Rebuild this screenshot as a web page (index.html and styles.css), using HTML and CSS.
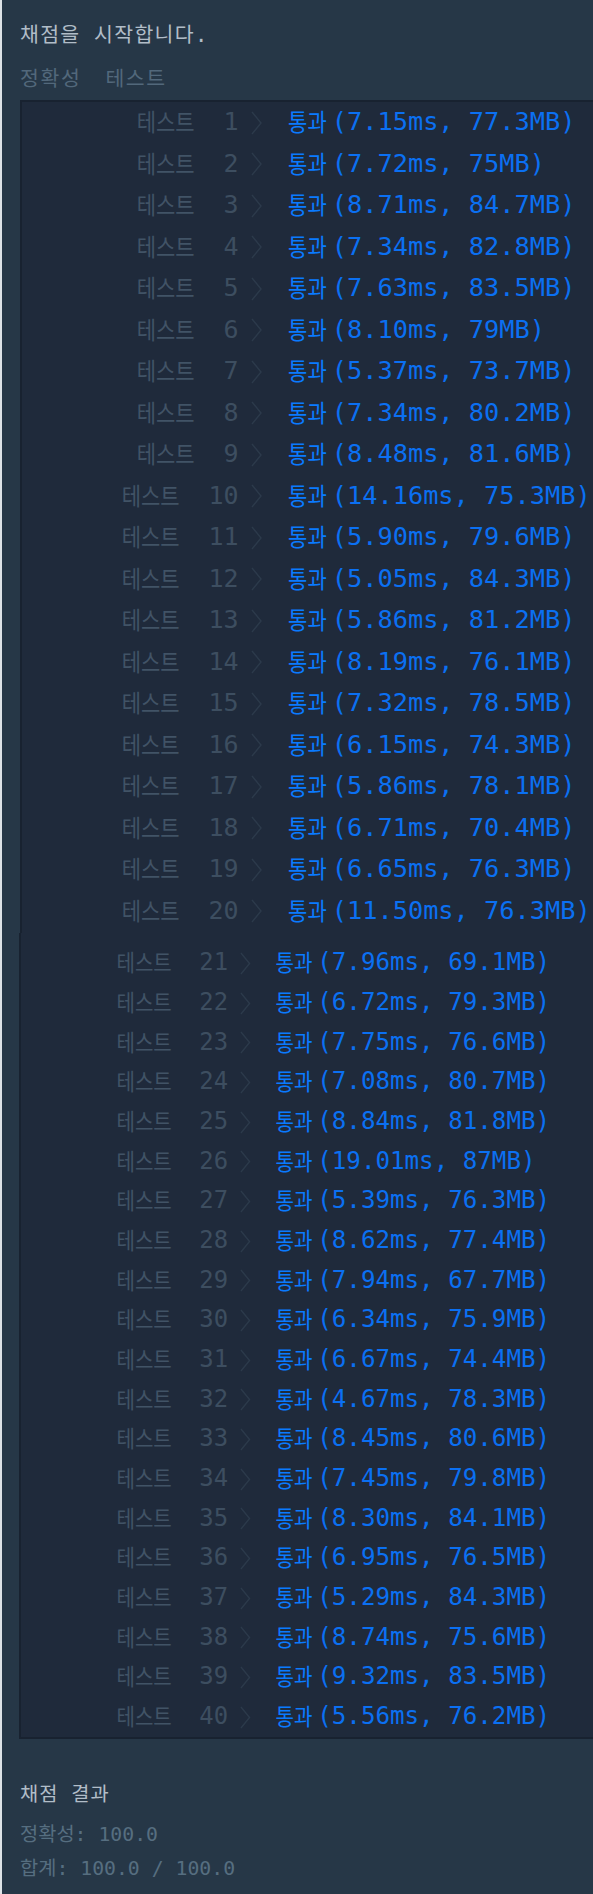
FILE: index.html
```html
<!DOCTYPE html>
<html lang="ko">
<head>
<meta charset="utf-8">
<title>채점 결과</title>
<link rel="stylesheet" href="styles.css">
</head>
<body>
<section class="shot shot-top">
  <p class="intro">채점을 시작합니다.</p>
  <div class="tabs"><span>정확성</span><span>테스트</span></div>
  <div class="console console-top">
    <div class="row"><span class="label"><span class="k">테스트</span><span class="n">1</span></span><svg class="chev" viewBox="0 0 11 24"><polyline points="1,1 10,12 1,23"/></svg><span class="res"><span class="pass">통과</span>(7.15ms, 77.3MB)</span></div>
    <div class="row"><span class="label"><span class="k">테스트</span><span class="n">2</span></span><svg class="chev" viewBox="0 0 11 24"><polyline points="1,1 10,12 1,23"/></svg><span class="res"><span class="pass">통과</span>(7.72ms, 75MB)</span></div>
    <div class="row"><span class="label"><span class="k">테스트</span><span class="n">3</span></span><svg class="chev" viewBox="0 0 11 24"><polyline points="1,1 10,12 1,23"/></svg><span class="res"><span class="pass">통과</span>(8.71ms, 84.7MB)</span></div>
    <div class="row"><span class="label"><span class="k">테스트</span><span class="n">4</span></span><svg class="chev" viewBox="0 0 11 24"><polyline points="1,1 10,12 1,23"/></svg><span class="res"><span class="pass">통과</span>(7.34ms, 82.8MB)</span></div>
    <div class="row"><span class="label"><span class="k">테스트</span><span class="n">5</span></span><svg class="chev" viewBox="0 0 11 24"><polyline points="1,1 10,12 1,23"/></svg><span class="res"><span class="pass">통과</span>(7.63ms, 83.5MB)</span></div>
    <div class="row"><span class="label"><span class="k">테스트</span><span class="n">6</span></span><svg class="chev" viewBox="0 0 11 24"><polyline points="1,1 10,12 1,23"/></svg><span class="res"><span class="pass">통과</span>(8.10ms, 79MB)</span></div>
    <div class="row"><span class="label"><span class="k">테스트</span><span class="n">7</span></span><svg class="chev" viewBox="0 0 11 24"><polyline points="1,1 10,12 1,23"/></svg><span class="res"><span class="pass">통과</span>(5.37ms, 73.7MB)</span></div>
    <div class="row"><span class="label"><span class="k">테스트</span><span class="n">8</span></span><svg class="chev" viewBox="0 0 11 24"><polyline points="1,1 10,12 1,23"/></svg><span class="res"><span class="pass">통과</span>(7.34ms, 80.2MB)</span></div>
    <div class="row"><span class="label"><span class="k">테스트</span><span class="n">9</span></span><svg class="chev" viewBox="0 0 11 24"><polyline points="1,1 10,12 1,23"/></svg><span class="res"><span class="pass">통과</span>(8.48ms, 81.6MB)</span></div>
    <div class="row"><span class="label"><span class="k">테스트</span><span class="n">10</span></span><svg class="chev" viewBox="0 0 11 24"><polyline points="1,1 10,12 1,23"/></svg><span class="res"><span class="pass">통과</span>(14.16ms, 75.3MB)</span></div>
    <div class="row"><span class="label"><span class="k">테스트</span><span class="n">11</span></span><svg class="chev" viewBox="0 0 11 24"><polyline points="1,1 10,12 1,23"/></svg><span class="res"><span class="pass">통과</span>(5.90ms, 79.6MB)</span></div>
    <div class="row"><span class="label"><span class="k">테스트</span><span class="n">12</span></span><svg class="chev" viewBox="0 0 11 24"><polyline points="1,1 10,12 1,23"/></svg><span class="res"><span class="pass">통과</span>(5.05ms, 84.3MB)</span></div>
    <div class="row"><span class="label"><span class="k">테스트</span><span class="n">13</span></span><svg class="chev" viewBox="0 0 11 24"><polyline points="1,1 10,12 1,23"/></svg><span class="res"><span class="pass">통과</span>(5.86ms, 81.2MB)</span></div>
    <div class="row"><span class="label"><span class="k">테스트</span><span class="n">14</span></span><svg class="chev" viewBox="0 0 11 24"><polyline points="1,1 10,12 1,23"/></svg><span class="res"><span class="pass">통과</span>(8.19ms, 76.1MB)</span></div>
    <div class="row"><span class="label"><span class="k">테스트</span><span class="n">15</span></span><svg class="chev" viewBox="0 0 11 24"><polyline points="1,1 10,12 1,23"/></svg><span class="res"><span class="pass">통과</span>(7.32ms, 78.5MB)</span></div>
    <div class="row"><span class="label"><span class="k">테스트</span><span class="n">16</span></span><svg class="chev" viewBox="0 0 11 24"><polyline points="1,1 10,12 1,23"/></svg><span class="res"><span class="pass">통과</span>(6.15ms, 74.3MB)</span></div>
    <div class="row"><span class="label"><span class="k">테스트</span><span class="n">17</span></span><svg class="chev" viewBox="0 0 11 24"><polyline points="1,1 10,12 1,23"/></svg><span class="res"><span class="pass">통과</span>(5.86ms, 78.1MB)</span></div>
    <div class="row"><span class="label"><span class="k">테스트</span><span class="n">18</span></span><svg class="chev" viewBox="0 0 11 24"><polyline points="1,1 10,12 1,23"/></svg><span class="res"><span class="pass">통과</span>(6.71ms, 70.4MB)</span></div>
    <div class="row"><span class="label"><span class="k">테스트</span><span class="n">19</span></span><svg class="chev" viewBox="0 0 11 24"><polyline points="1,1 10,12 1,23"/></svg><span class="res"><span class="pass">통과</span>(6.65ms, 76.3MB)</span></div>
    <div class="row"><span class="label"><span class="k">테스트</span><span class="n">20</span></span><svg class="chev" viewBox="0 0 11 24"><polyline points="1,1 10,12 1,23"/></svg><span class="res"><span class="pass">통과</span>(11.50ms, 76.3MB)</span></div>
  </div>
</section>
<section class="shot shot-bottom">
  <div class="console console-bottom">
    <div class="row"><span class="label"><span class="k">테스트</span><span class="n">21</span></span><svg class="chev" viewBox="0 0 11 24"><polyline points="1,1 10,12 1,23"/></svg><span class="res"><span class="pass">통과</span>(7.96ms, 69.1MB)</span></div>
    <div class="row"><span class="label"><span class="k">테스트</span><span class="n">22</span></span><svg class="chev" viewBox="0 0 11 24"><polyline points="1,1 10,12 1,23"/></svg><span class="res"><span class="pass">통과</span>(6.72ms, 79.3MB)</span></div>
    <div class="row"><span class="label"><span class="k">테스트</span><span class="n">23</span></span><svg class="chev" viewBox="0 0 11 24"><polyline points="1,1 10,12 1,23"/></svg><span class="res"><span class="pass">통과</span>(7.75ms, 76.6MB)</span></div>
    <div class="row"><span class="label"><span class="k">테스트</span><span class="n">24</span></span><svg class="chev" viewBox="0 0 11 24"><polyline points="1,1 10,12 1,23"/></svg><span class="res"><span class="pass">통과</span>(7.08ms, 80.7MB)</span></div>
    <div class="row"><span class="label"><span class="k">테스트</span><span class="n">25</span></span><svg class="chev" viewBox="0 0 11 24"><polyline points="1,1 10,12 1,23"/></svg><span class="res"><span class="pass">통과</span>(8.84ms, 81.8MB)</span></div>
    <div class="row"><span class="label"><span class="k">테스트</span><span class="n">26</span></span><svg class="chev" viewBox="0 0 11 24"><polyline points="1,1 10,12 1,23"/></svg><span class="res"><span class="pass">통과</span>(19.01ms, 87MB)</span></div>
    <div class="row"><span class="label"><span class="k">테스트</span><span class="n">27</span></span><svg class="chev" viewBox="0 0 11 24"><polyline points="1,1 10,12 1,23"/></svg><span class="res"><span class="pass">통과</span>(5.39ms, 76.3MB)</span></div>
    <div class="row"><span class="label"><span class="k">테스트</span><span class="n">28</span></span><svg class="chev" viewBox="0 0 11 24"><polyline points="1,1 10,12 1,23"/></svg><span class="res"><span class="pass">통과</span>(8.62ms, 77.4MB)</span></div>
    <div class="row"><span class="label"><span class="k">테스트</span><span class="n">29</span></span><svg class="chev" viewBox="0 0 11 24"><polyline points="1,1 10,12 1,23"/></svg><span class="res"><span class="pass">통과</span>(7.94ms, 67.7MB)</span></div>
    <div class="row"><span class="label"><span class="k">테스트</span><span class="n">30</span></span><svg class="chev" viewBox="0 0 11 24"><polyline points="1,1 10,12 1,23"/></svg><span class="res"><span class="pass">통과</span>(6.34ms, 75.9MB)</span></div>
    <div class="row"><span class="label"><span class="k">테스트</span><span class="n">31</span></span><svg class="chev" viewBox="0 0 11 24"><polyline points="1,1 10,12 1,23"/></svg><span class="res"><span class="pass">통과</span>(6.67ms, 74.4MB)</span></div>
    <div class="row"><span class="label"><span class="k">테스트</span><span class="n">32</span></span><svg class="chev" viewBox="0 0 11 24"><polyline points="1,1 10,12 1,23"/></svg><span class="res"><span class="pass">통과</span>(4.67ms, 78.3MB)</span></div>
    <div class="row"><span class="label"><span class="k">테스트</span><span class="n">33</span></span><svg class="chev" viewBox="0 0 11 24"><polyline points="1,1 10,12 1,23"/></svg><span class="res"><span class="pass">통과</span>(8.45ms, 80.6MB)</span></div>
    <div class="row"><span class="label"><span class="k">테스트</span><span class="n">34</span></span><svg class="chev" viewBox="0 0 11 24"><polyline points="1,1 10,12 1,23"/></svg><span class="res"><span class="pass">통과</span>(7.45ms, 79.8MB)</span></div>
    <div class="row"><span class="label"><span class="k">테스트</span><span class="n">35</span></span><svg class="chev" viewBox="0 0 11 24"><polyline points="1,1 10,12 1,23"/></svg><span class="res"><span class="pass">통과</span>(8.30ms, 84.1MB)</span></div>
    <div class="row"><span class="label"><span class="k">테스트</span><span class="n">36</span></span><svg class="chev" viewBox="0 0 11 24"><polyline points="1,1 10,12 1,23"/></svg><span class="res"><span class="pass">통과</span>(6.95ms, 76.5MB)</span></div>
    <div class="row"><span class="label"><span class="k">테스트</span><span class="n">37</span></span><svg class="chev" viewBox="0 0 11 24"><polyline points="1,1 10,12 1,23"/></svg><span class="res"><span class="pass">통과</span>(5.29ms, 84.3MB)</span></div>
    <div class="row"><span class="label"><span class="k">테스트</span><span class="n">38</span></span><svg class="chev" viewBox="0 0 11 24"><polyline points="1,1 10,12 1,23"/></svg><span class="res"><span class="pass">통과</span>(8.74ms, 75.6MB)</span></div>
    <div class="row"><span class="label"><span class="k">테스트</span><span class="n">39</span></span><svg class="chev" viewBox="0 0 11 24"><polyline points="1,1 10,12 1,23"/></svg><span class="res"><span class="pass">통과</span>(9.32ms, 83.5MB)</span></div>
    <div class="row"><span class="label"><span class="k">테스트</span><span class="n">40</span></span><svg class="chev" viewBox="0 0 11 24"><polyline points="1,1 10,12 1,23"/></svg><span class="res"><span class="pass">통과</span>(5.56ms, 76.2MB)</span></div>
  </div>
  <div class="summary">
    <p class="summary-title">채점 결과</p>
    <p class="summary-line summary-acc">정확성: 100.0</p>
    <p class="summary-line summary-total">합계: 100.0 / 100.0</p>
  </div>
</section>
</body>
</html>
```

FILE: styles.css
```css
html, body {
  margin: 0;
  padding: 0;
}

body {
  width: 593px;
  min-height: 1894px;
  overflow: hidden;
  background: linear-gradient(to right, #dde2e6 0, #dde2e6 2px, #263747 2px);
  font-family: "DejaVu Sans Mono", "Noto Sans CJK KR", monospace;
  color: #b3bfca;
}

.shot {
  display: flex;
  flex-direction: column;
  overflow: hidden;
}

.shot-top {
  font-size: 25px;
  height: 933px;
}

.shot-bottom {
  font-size: 23.9px;
  height: 961px;
}

.intro {
  margin: 0;
  padding: 22.5px 0 0 20px;
  font-size: 20.5px;
  line-height: 24px;
  letter-spacing: 1.3px;
  color: #b1bdc8;
}

.tabs {
  display: flex;
  gap: 24px;
  margin-top: 20px;
  padding-left: 20px;
  font-size: 20.5px;
  line-height: 24px;
  letter-spacing: 1.6px;
  color: #52687b;
}

.console {
  display: flex;
  flex-direction: column;
  background: #1f2a3b;
  border-left: 2px solid #182230;
  margin-left: 0.8em;
}

.console-top {
  margin-top: 9.5px;
  border-top: 2px solid #182230;
  flex: 1;
}

.console-bottom {
  padding-top: 10.7px;
  border-bottom: 2px solid #182230;
}

.row {
  display: flex;
  align-items: center;
  height: 1.66em;
  line-height: 1.66em;
  white-space: nowrap;
}

.label {
  width: 8.66em;
  flex: none;
  text-align: right;
  color: #415366;
}

.k {
  display: inline-block;
  font-size: 0.84em;
  transform: scaleY(1.16);
}

.n {
  margin-left: 1.15em;
  color: #3d4e60;
}

.chev {
  flex: none;
  width: 0.44em;
  height: 0.96em;
  margin-left: 0.504em;
  fill: none;
  stroke: #2c3a4b;
  stroke-width: 1.4;
}

.res {
  font-size: 1.012em;
  margin-left: 1.028em;
  color: #0b70f2;
}

.pass {
  display: inline-block;
  font-size: 0.83em;
  margin-right: 0.24em;
  transform: scaleY(1.16);
  color: #0a7bff;
}

.summary {
  display: flex;
  flex-direction: column;
  padding-left: 20px;
  font-size: 19.8px;
  line-height: 24px;
}

.summary p {
  margin: 0;
}

.summary-title {
  margin-top: 43.8px !important;
  letter-spacing: 1px;
  color: #b1bdc8;
}

.summary-line {
  color: #566e80;
}

.summary-acc {
  margin-top: 16.5px !important;
}

.summary-total {
  margin-top: 10px !important;
}
```
